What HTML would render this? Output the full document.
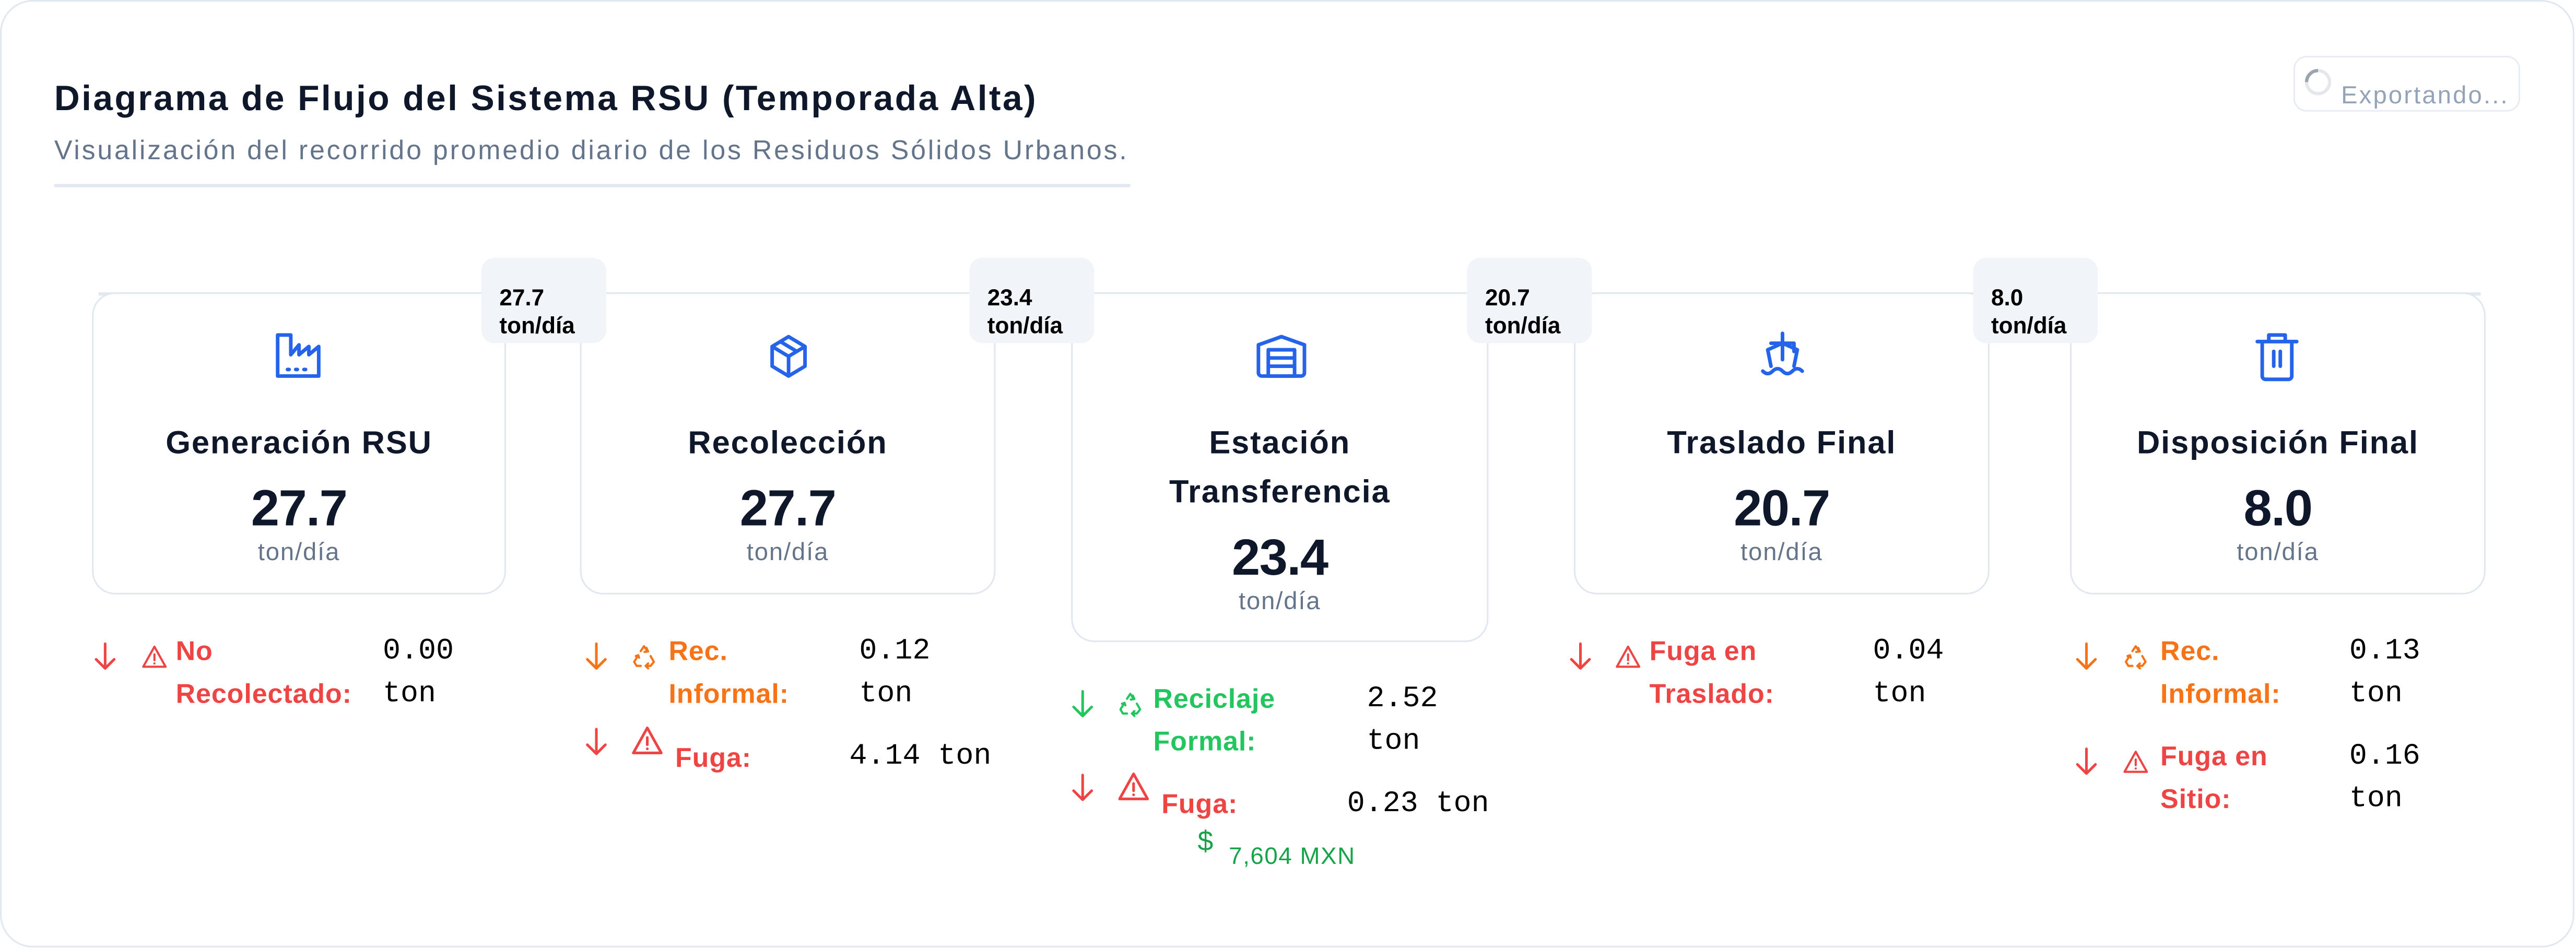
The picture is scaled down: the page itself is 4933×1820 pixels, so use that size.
<!DOCTYPE html>
<html><head><meta charset="utf-8"><style>
html,body{margin:0;padding:0;background:#fff;width:4933px;height:1820px;overflow:hidden}
#w{position:absolute;left:0;top:0;width:1568px;height:578.5px;transform:scale(3.14605);transform-origin:0 0;font-family:"Liberation Sans",sans-serif}
.a{position:absolute}
.card{position:absolute;background:#fff;border:1.5px solid #e2e8f0;border-radius:14px;box-sizing:border-box}
.badge{position:absolute;background:#f1f5f9;border-radius:8px;width:76px;height:52px;box-sizing:border-box;padding:16px 0 0 11px;font-weight:bold;font-size:14px;line-height:17px;color:#000}
.t{position:absolute;text-align:center;font-weight:bold;font-size:19.5px;color:#0f172a;line-height:30px;letter-spacing:0.6px}
.v{position:absolute;text-align:center;font-weight:bold;font-size:31px;color:#0f172a;letter-spacing:-0.5px}
.u{position:absolute;text-align:center;font-size:15px;color:#64748b;letter-spacing:0.6px}
.lab{position:absolute;font-weight:bold;font-size:16.5px;line-height:26px;letter-spacing:0.3px}
.val{position:absolute;font-family:"Liberation Mono",monospace;font-size:18px;line-height:26px;color:#000}
svg{position:absolute}
</style></head><body><div id="w">
<svg width="0" height="0" style="position:absolute">
<defs>
<symbol id="arr" viewBox="0 0 14 18"><path d="M7 1v15M1.5 10.5L7 16l5.5-5.5" fill="none" stroke="currentColor" stroke-width="1.6" stroke-linecap="round" stroke-linejoin="round"/></symbol>
<symbol id="rec" viewBox="0 0 16 16"><g fill="none" stroke="currentColor" stroke-width="1.3" stroke-linecap="round" stroke-linejoin="round"><path d="M6 4.5L8 1.5l2 3M9.5 2.5l1 2.2-2.2.3"/><path d="M12 7.5l2 3.5-2 2.5H9M10.5 12l-1.5 1.5 1.5 1.5"/><path d="M4.5 7L2 11l1.5 2.5H6M3 7.5l1.5-.5.5 1.5"/></g></symbol>
<symbol id="warn" viewBox="0 0 16 16"><g fill="none" stroke="currentColor" stroke-width="1.3" stroke-linejoin="round" stroke-linecap="round"><path d="M8 1.8L1.2 14h13.6z"/><path d="M8 6.5v3.5M8 12h.01"/></g></symbol>
</defs></svg>
<div class="a" style="left:0;top:0;width:1567px;height:577px;border:1.5px solid #e2e8f0;border-radius:20px;box-sizing:border-box"></div>
<div class="a" style="left:33px;top:48px;font-size:21.5px;font-weight:bold;color:#0f172a;letter-spacing:1.1px">Diagrama de Flujo del Sistema RSU (Temporada Alta)</div>
<div class="a" style="left:33px;top:83px;font-size:16.5px;color:#64748b;letter-spacing:1.2px">Visualización del recorrido promedio diario de los Residuos Sólidos Urbanos.</div>
<div class="a" style="left:33px;top:112px;width:655px;height:2px;background:#e2e8f0"></div>
<div class="a" style="left:1396px;top:34px;width:138px;height:34px;border:1.5px solid #e8edf3;border-radius:8px;box-sizing:border-box"></div>
<svg style="left:1402px;top:41px" width="18" height="18" viewBox="0 0 18 18"><circle cx="9" cy="9" r="7" fill="none" stroke="#e5e7eb" stroke-width="2"/><path d="M9 2a7 7 0 0 0-7 7" fill="none" stroke="#9ca3af" stroke-width="2"/></svg>
<div class="a" style="left:1425px;top:50px;font-size:15px;color:#94a3b8;letter-spacing:1px">Exportando...</div>

<div class="a" style="left:60px;top:178px;width:1450px;height:2px;background:#e2e8f0"></div>

<div class="card" style="left:56px;top:178px;width:252px;height:184px"></div>
<div class="card" style="left:353px;top:178px;width:253px;height:184px"></div>
<div class="card" style="left:652px;top:178px;width:254px;height:213px"></div>
<div class="card" style="left:958px;top:178px;width:253px;height:184px"></div>
<div class="card" style="left:1260px;top:178px;width:253px;height:184px"></div>

<div class="badge" style="left:293px;top:157px">27.7<br>ton/día</div>
<div class="badge" style="left:590px;top:157px">23.4<br>ton/día</div>
<div class="badge" style="left:893px;top:157px">20.7<br>ton/día</div>
<div class="badge" style="left:1201px;top:157px">8.0<br>ton/día</div>

<svg style="left:166px;top:202px" width="32" height="30" viewBox="0 0 32 30" fill="none" stroke="#2563eb" stroke-width="2.2" stroke-linejoin="round" stroke-linecap="round"><path d="M3 2v25h25V9l-6 5V9l-6 5V8l-5 6V2z"/><path d="M9 23h1M14 23h1M19 23h1"/></svg>
<svg style="left:466px;top:203px" width="28" height="28" viewBox="0 0 28 28" fill="none" stroke="#2563eb" stroke-width="2.2" stroke-linejoin="round"><path d="M14 2l10 6v12l-10 6-10-6V8z"/><path d="M4 8l10 6 10-6M14 14v12M9 5l10 6"/></svg>
<svg style="left:764px;top:203px" width="32" height="28" viewBox="0 0 32 28" fill="none" stroke="#2563eb" stroke-width="2.2" stroke-linejoin="round"><path d="M2 7l14-5 14 5v17a2 2 0 0 1-2 2H4a2 2 0 0 1-2-2z"/><path d="M8 10h16v16H8zM8 15h16M8 20h16"/></svg>
<svg style="left:1069px;top:201px" width="32" height="32" viewBox="0 0 32 32" fill="none" stroke="#2563eb" stroke-width="2.2" stroke-linejoin="round" stroke-linecap="round"><path d="M16 2v6M9 22l-2-10 9-4 9 4-2 10"/><path d="M9 8h14v5"/><path d="M16 8v10M4 25c2 2 4 2 6 0s4-2 6 0 4 2 6 0 4-2 6 0"/></svg>
<svg style="left:1371px;top:201px" width="30" height="32" viewBox="0 0 30 32" fill="none" stroke="#2563eb" stroke-width="2.2" stroke-linejoin="round" stroke-linecap="round"><path d="M3 7h24M10 7V3h10v4M6 7v21a2 2 0 0 0 2 2h14a2 2 0 0 0 2-2V7M13 13v9M17 13v9"/></svg>

<div class="t" style="left:56px;top:255px;width:252px">Generación RSU</div>
<div class="v" style="left:56px;top:292px;width:252px">27.7</div>
<div class="u" style="left:56px;top:328px;width:252px">ton/día</div>
<div class="t" style="left:353px;top:255px;width:253px">Recolección</div>
<div class="v" style="left:353px;top:292px;width:253px">27.7</div>
<div class="u" style="left:353px;top:328px;width:253px">ton/día</div>
<div class="t" style="left:652px;top:255px;width:254px">Estación<br>Transferencia</div>
<div class="v" style="left:652px;top:322px;width:254px">23.4</div>
<div class="u" style="left:652px;top:358px;width:254px">ton/día</div>
<div class="t" style="left:958px;top:255px;width:253px">Traslado Final</div>
<div class="v" style="left:958px;top:292px;width:253px">20.7</div>
<div class="u" style="left:958px;top:328px;width:253px">ton/día</div>
<div class="t" style="left:1260px;top:255px;width:253px">Disposición Final</div>
<div class="v" style="left:1260px;top:292px;width:253px">8.0</div>
<div class="u" style="left:1260px;top:328px;width:253px">ton/día</div>

<!-- losses -->
<svg style="left:57px;top:391px;color:#ef4444" width="14" height="18"><use href="#arr"/></svg>
<svg style="left:86px;top:392px;color:#ef4444" width="16" height="16"><use href="#warn"/></svg>
<div class="lab" style="left:107px;top:384px;color:#ef4444">No<br>Recolectado:</div>
<div class="val" style="left:233px;top:384px">0.00<br>ton</div>

<svg style="left:356px;top:391px;color:#f97316" width="14" height="18"><use href="#arr"/></svg>
<svg style="left:384px;top:392px;color:#f97316" width="16" height="16"><use href="#rec"/></svg>
<div class="lab" style="left:407px;top:384px;color:#f97316">Rec.<br>Informal:</div>
<div class="val" style="left:523px;top:384px">0.12<br>ton</div>
<svg style="left:356px;top:443px;color:#ef4444" width="14" height="18"><use href="#arr"/></svg>
<svg style="left:384px;top:441px;color:#ef4444" width="20" height="20"><use href="#warn"/></svg>
<div class="lab" style="left:411px;top:449px;color:#ef4444">Fuga:</div>
<div class="val" style="left:517px;top:448px">4.14 ton</div>

<svg style="left:652px;top:420px;color:#22c55e" width="14" height="18"><use href="#arr"/></svg>
<svg style="left:680px;top:421px;color:#22c55e" width="16" height="16"><use href="#rec"/></svg>
<div class="lab" style="left:702px;top:413px;color:#22c55e">Reciclaje<br>Formal:</div>
<div class="val" style="left:832px;top:413px">2.52<br>ton</div>
<svg style="left:652px;top:471px;color:#ef4444" width="14" height="18"><use href="#arr"/></svg>
<svg style="left:680px;top:469px;color:#ef4444" width="20" height="20"><use href="#warn"/></svg>
<div class="lab" style="left:707px;top:477px;color:#ef4444">Fuga:</div>
<div class="val" style="left:820px;top:477px">0.23 ton</div>
<div class="a" style="left:729px;top:503px;font-size:17px;color:#16a34a">$</div>
<div class="a" style="left:748px;top:514px;font-size:14.5px;color:#16a34a;letter-spacing:0.5px">7,604 MXN</div>

<svg style="left:955px;top:391px;color:#ef4444" width="14" height="18"><use href="#arr"/></svg>
<svg style="left:983px;top:392px;color:#ef4444" width="16" height="16"><use href="#warn"/></svg>
<div class="lab" style="left:1004px;top:384px;color:#ef4444">Fuga en<br>Traslado:</div>
<div class="val" style="left:1140px;top:384px">0.04<br>ton</div>

<svg style="left:1263px;top:391px;color:#f97316" width="14" height="18"><use href="#arr"/></svg>
<svg style="left:1292px;top:392px;color:#f97316" width="16" height="16"><use href="#rec"/></svg>
<div class="lab" style="left:1315px;top:384px;color:#f97316">Rec.<br>Informal:</div>
<div class="val" style="left:1430px;top:384px">0.13<br>ton</div>
<svg style="left:1263px;top:455px;color:#ef4444" width="14" height="18"><use href="#arr"/></svg>
<svg style="left:1292px;top:456px;color:#ef4444" width="16" height="16"><use href="#warn"/></svg>
<div class="lab" style="left:1315px;top:448px;color:#ef4444">Fuga en<br>Sitio:</div>
<div class="val" style="left:1430px;top:448px">0.16<br>ton</div>
</div></body></html>
